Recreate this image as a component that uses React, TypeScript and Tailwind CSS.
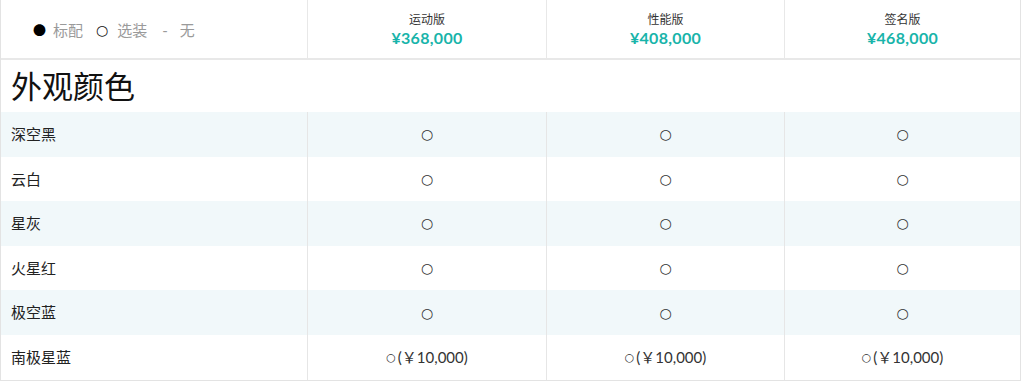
import React from "react";

const trims = [
  { name: "运动版", price: "¥368,000" },
  { name: "性能版", price: "¥408,000" },
  { name: "签名版", price: "¥468,000" },
];

const colors = [
  { name: "深空黑", extra: "" },
  { name: "云白", extra: "" },
  { name: "星灰", extra: "" },
  { name: "火星红", extra: "" },
  { name: "极空蓝", extra: "" },
  { name: "南极星蓝", extra: "(￥10,000)" },
];

const font = { fontFamily: "Lato, 'Noto Sans CJK SC', sans-serif" };

export default function App() {
  return (
    <div className="w-[1024px] h-[381px] bg-white overflow-hidden" style={font}>
      <div className="w-[1021px] border-x border-b border-[#e3e3e3]">
        {/* header */}
        <div className="grid grid-cols-[306px_239px_238px_236px] h-[60px] border-b-2 border-[#e8e8e8]">
          <div className="flex items-center pl-[32px] pt-[2px] text-[15px] text-[#9a9a9a]">
            <span className="font-['Noto_Sans_CJK_SC'] text-[13px] text-black mr-[7px]">●</span>
            <span>标配</span>
            <span className="font-['DejaVu_Sans'] text-[14px] leading-none text-[#111] ml-[13px] mr-[9px]">○</span>
            <span>选装</span>
            <span className="ml-[15px]">-</span>
            <span className="ml-[12px]">无</span>
          </div>
          {trims.map((t) => (
            <div
              key={t.name}
              className="flex flex-col items-center justify-center border-l border-[#e8e8e8] pt-[1px]"
            >
              <span className="text-[12px] leading-[16px] text-[#333]">{t.name}</span>
              <span className="text-[16px] leading-[20px] font-bold tracking-[0.3px] text-[#18b4aa]">
                {t.price}
              </span>
            </div>
          ))}
        </div>

        {/* section title */}
        <div className="h-[52px] flex items-center pl-[10px] text-[31px] text-[#111]">
          外观颜色
        </div>

        {colors.map((c, i) => (
          <div
            key={c.name}
            className={`grid grid-cols-[306px_239px_238px_236px] h-[44.6px] ${
              i % 2 === 0 ? "bg-[#f1f8fa]" : "bg-white"
            }`}
          >
            <div className="flex items-center pl-[10px] text-[15px] text-[#222]">{c.name}</div>
            {trims.map((t) => (
              <div
                key={t.name}
                className="flex items-center justify-center gap-[2px] border-l border-[#e6e6e6] text-[15px] text-[#333]"
              >
                <span
                  className={`font-['DejaVu_Sans'] leading-none text-[#333] ${
                    c.extra ? "text-[11px]" : "text-[14px]"
                  }`}
                >
                  ○
                </span>
                {c.extra && <span>{c.extra}</span>}
              </div>
            ))}
          </div>
        ))}
      </div>
    </div>
  );
}
